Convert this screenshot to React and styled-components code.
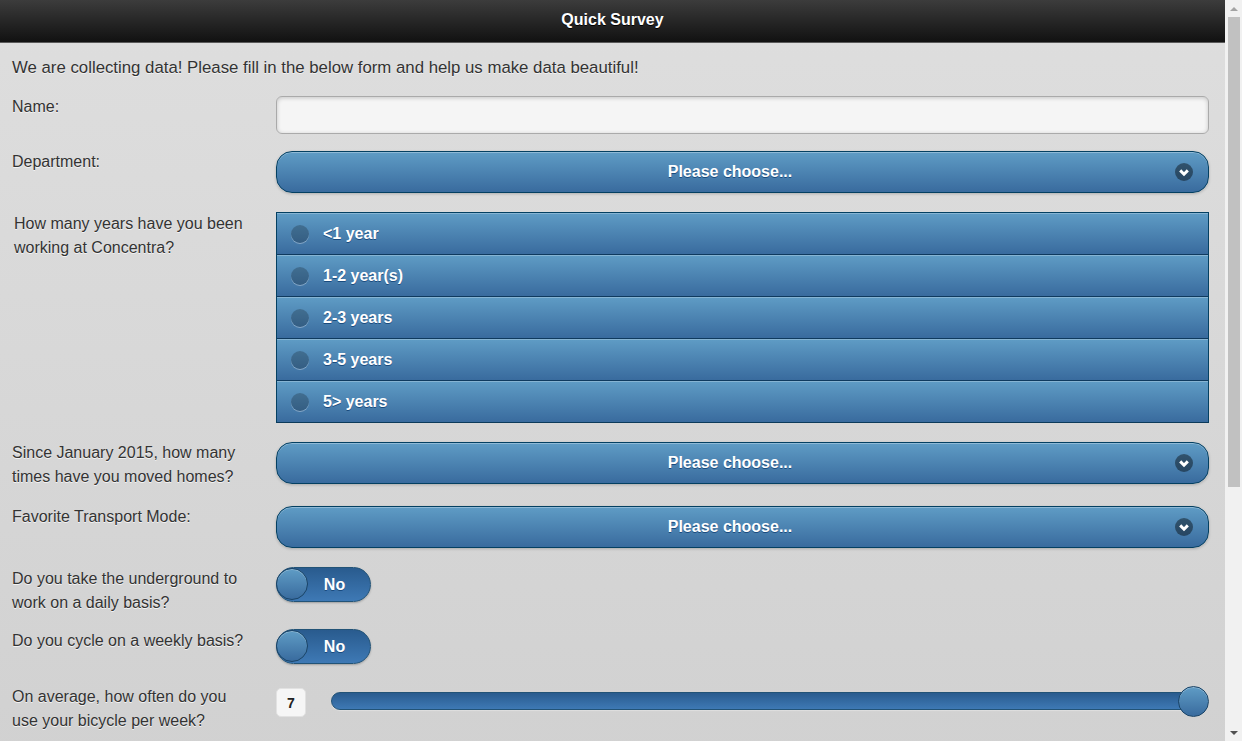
import React from "react"
import styled, { createGlobalStyle } from "styled-components"

const GlobalStyle = createGlobalStyle`
  html, body {
    margin: 0;
    padding: 0;
  }

  body {
    font-family: "Liberation Sans", Arial, Helvetica, sans-serif;
    background: #d2d2d2;
  }
`

const blueUp = "linear-gradient(#5f9cc5, #396b9e)"
const blueDown = "linear-gradient(#295b8e, #3e79b5)"

const Frame = styled.div`
  display: grid;
  grid-template-columns: 1fr 17px;
  align-items: start;
`

const ScrollBar = styled.aside`
  position: sticky;
  top: 0;
  height: 100vh;
  background: #f1f1f1;
  display: flex;
  flex-direction: column;
`

const ScrollArrow = styled.div`
  height: 17px;
  display: flex;
  align-items: center;
  justify-content: center;

  &::before {
    content: "";
    width: 0;
    height: 0;
    border-left: 4px solid transparent;
    border-right: 4px solid transparent;
    ${(p) =>
      p.$down
        ? "border-top: 4px solid #505050;"
        : "border-bottom: 4px solid #a3a3a3;"}
  }
`

const ScrollTrack = styled.div`
  flex: 1;
  padding: 0 2px 0 3px;
`

const ScrollThumb = styled.div`
  height: 470px;
  background: #c1c1c1;
`

const Header = styled.header`
  height: 42px;
  border-bottom: 1px solid #5a5a5a;
  background: linear-gradient(#3c3c3c, #111);
  display: flex;
  align-items: center;
  justify-content: center;

  h1 {
    margin: 0 0 3px;
    font-size: 16px;
    font-weight: bold;
    color: #fff;
    text-shadow: 0 1px 0 #000;
  }
`

const Page = styled.div`
  min-height: 1114px;
  background: linear-gradient(#dedede, #cbcbcb);
`

const Content = styled.main`
  padding: 13px 16px 30px 12px;
  color: #333;
  font-size: 16px;
  line-height: 24px;
  text-shadow: 0 1px 0 #f3f3f3;
`

const Intro = styled.p`
  margin: 0;
  font-size: 16.8px;
`

const Row = styled.div`
  display: grid;
  grid-template-columns: 264px 1fr;
  align-items: start;
  margin-top: ${(p) => p.$gap}px;
`

const Label = styled.label`
  padding: 1px 20px 0 ${(p) => (p.$indent ? 2 : 0)}px;
`

const TextInput = styled.input`
  box-sizing: border-box;
  width: 100%;
  height: 38px;
  margin-top: 2px;
  border: 1px solid #aaa;
  border-radius: 6px;
  background: #f5f5f5;
  box-shadow: inset 0 1px 4px rgba(0, 0, 0, 0.2);
  font: inherit;
  padding: 0 10px;
  outline: none;
`

const SelectButton = styled.div`
  position: relative;
  box-sizing: border-box;
  height: 42px;
  margin-top: 2px;
  padding: 0 40px 0 15px;
  border: 1px solid #044062;
  border-radius: 16px;
  background: ${blueUp};
  box-shadow: 0 1px 3px rgba(0, 0, 0, 0.2), inset 0 1px 0 rgba(255, 255, 255, 0.3);
  display: flex;
  align-items: center;
  justify-content: center;
  color: #fff;
  font-weight: bold;
  text-shadow: 0 1px 0 #194b7e;
  cursor: pointer;
`

const SelectIcon = styled.svg`
  position: absolute;
  right: 15px;
  top: 11px;
`

const RadioGroup = styled.div`
  margin-top: 1px;
  border: 1px solid #044062;
  border-bottom-color: #0c3a5a;
`

const RadioItem = styled.div`
  position: relative;
  height: 41px;
  box-sizing: border-box;
  padding: 1px 0 0 46px;
  display: flex;
  align-items: center;
  background: ${blueUp};
  box-shadow: inset 0 1px 0 rgba(255, 255, 255, 0.25);
  color: #fff;
  font-weight: bold;
  text-shadow: 0 1px 0 #194b7e;
  cursor: pointer;

  & + & {
    height: 42px;
    border-top: 1px solid #0f3a5e;
  }
`

const RadioDot = styled.span`
  width: 18px;
  height: 18px;
  position: absolute;
  left: 14px;
  top: calc(50% - 9px);
  border-radius: 50%;
  background: rgba(0, 0, 0, 0.22);
  box-shadow: 0 1px 0 rgba(255, 255, 255, 0.35);
`

const Toggle = styled.div`
  position: relative;
  box-sizing: border-box;
  width: 95px;
  height: 35px;
  margin-top: 1px;
  padding-left: 22px;
  border: 1px solid #225377;
  border-radius: 18px;
  background: ${blueDown};
  box-shadow: 0 1px 2px rgba(0, 0, 0, 0.25);
  display: flex;
  align-items: center;
  justify-content: center;
  color: #fff;
  font-weight: bold;
  text-shadow: 0 1px 0 #194b7e;
  cursor: pointer;
`

const ToggleHandle = styled.span`
  position: absolute;
  left: -1px;
  top: 0;
  box-sizing: border-box;
  width: 32px;
  height: 32px;
  border: 1px solid #1a4467;
  border-radius: 50%;
  background: ${blueUp};
  box-shadow: inset 0 1px 0 rgba(255, 255, 255, 0.3);
`

const SliderControl = styled.div`
  display: flex;
  align-items: center;
  gap: 25px;
  margin-top: 4px;
`

const SliderValue = styled.div`
  box-sizing: border-box;
  width: 30px;
  height: 29px;
  border: 1px solid #e2e2e2;
  border-radius: 5px;
  background: #f6f6f6;
  display: flex;
  align-items: center;
  justify-content: center;
  font-size: 14px;
  font-weight: bold;
  color: #222;
  text-shadow: none;
`

const SliderTrack = styled.div`
  position: relative;
  flex: 1;
  box-sizing: border-box;
  height: 18px;
  margin: -3px 3px 0 0;
  border: 1px solid #225377;
  border-radius: 9px;
  background: ${blueDown};
  box-shadow: 0 1px 1px rgba(255, 255, 255, 0.3);
`

const SliderHandle = styled.span`
  position: absolute;
  right: -4px;
  top: -7px;
  box-sizing: border-box;
  width: 31px;
  height: 31px;
  border: 1px solid #1a4467;
  border-radius: 50%;
  background: ${blueUp};
  box-shadow: inset 0 1px 0 rgba(255, 255, 255, 0.3);
`

const ChevronCircle = () => (
  <SelectIcon width="18" height="18" viewBox="0 0 18 18">
    <circle cx="9" cy="9" r="9" fill="rgba(0,0,0,0.42)" />
    <polyline points="5.2,7.4 9,11.2 12.8,7.4" fill="none" stroke="#fff" strokeWidth="3" />
  </SelectIcon>
)

const Select = () => (
  <SelectButton>
    Please choose...
    <ChevronCircle />
  </SelectButton>
)

const years = ["<1 year", "1-2 year(s)", "2-3 years", "3-5 years", "5> years"]

const App = () => {
  return (
    <>
      <GlobalStyle />
      <Frame>
        <Page>
          <Header>
            <h1>Quick Survey</h1>
          </Header>
          <Content>
            <Intro>We are collecting data! Please fill in the below form and help us make data beautiful!</Intro>

            <Row $gap={14}>
              <Label>Name:</Label>
              <TextInput type="text" />
            </Row>

            <Row $gap={15}>
              <Label>Department:</Label>
              <Select />
            </Row>

            <Row $gap={18}>
              <Label $indent>How many years have you been working at Concentra?</Label>
              <RadioGroup>
                {years.map((y) => (
                  <RadioItem key={y}>
                    <RadioDot />
                    {y}
                  </RadioItem>
                ))}
              </RadioGroup>
            </Row>

            <Row $gap={17}>
              <Label>Since January 2015, how many times have you moved homes?</Label>
              <Select />
            </Row>

            <Row $gap={15}>
              <Label>Favorite Transport Mode:</Label>
              <Select />
            </Row>

            <Row $gap={18}>
              <Label>Do you take the underground to work on a daily basis?</Label>
              <Toggle>
                <ToggleHandle />
                No
              </Toggle>
            </Row>

            <Row $gap={13}>
              <Label>Do you cycle on a weekly basis?</Label>
              <Toggle>
                <ToggleHandle />
                No
              </Toggle>
            </Row>

            <Row $gap={20}>
              <Label>On average, how often do you use your bicycle per week?</Label>
              <SliderControl>
                <SliderValue>7</SliderValue>
                <SliderTrack>
                  <SliderHandle />
                </SliderTrack>
              </SliderControl>
            </Row>
          </Content>
        </Page>
        <ScrollBar>
          <ScrollArrow />
          <ScrollTrack>
            <ScrollThumb />
          </ScrollTrack>
          <ScrollArrow $down />
        </ScrollBar>
      </Frame>
    </>
  )
}

export default App
